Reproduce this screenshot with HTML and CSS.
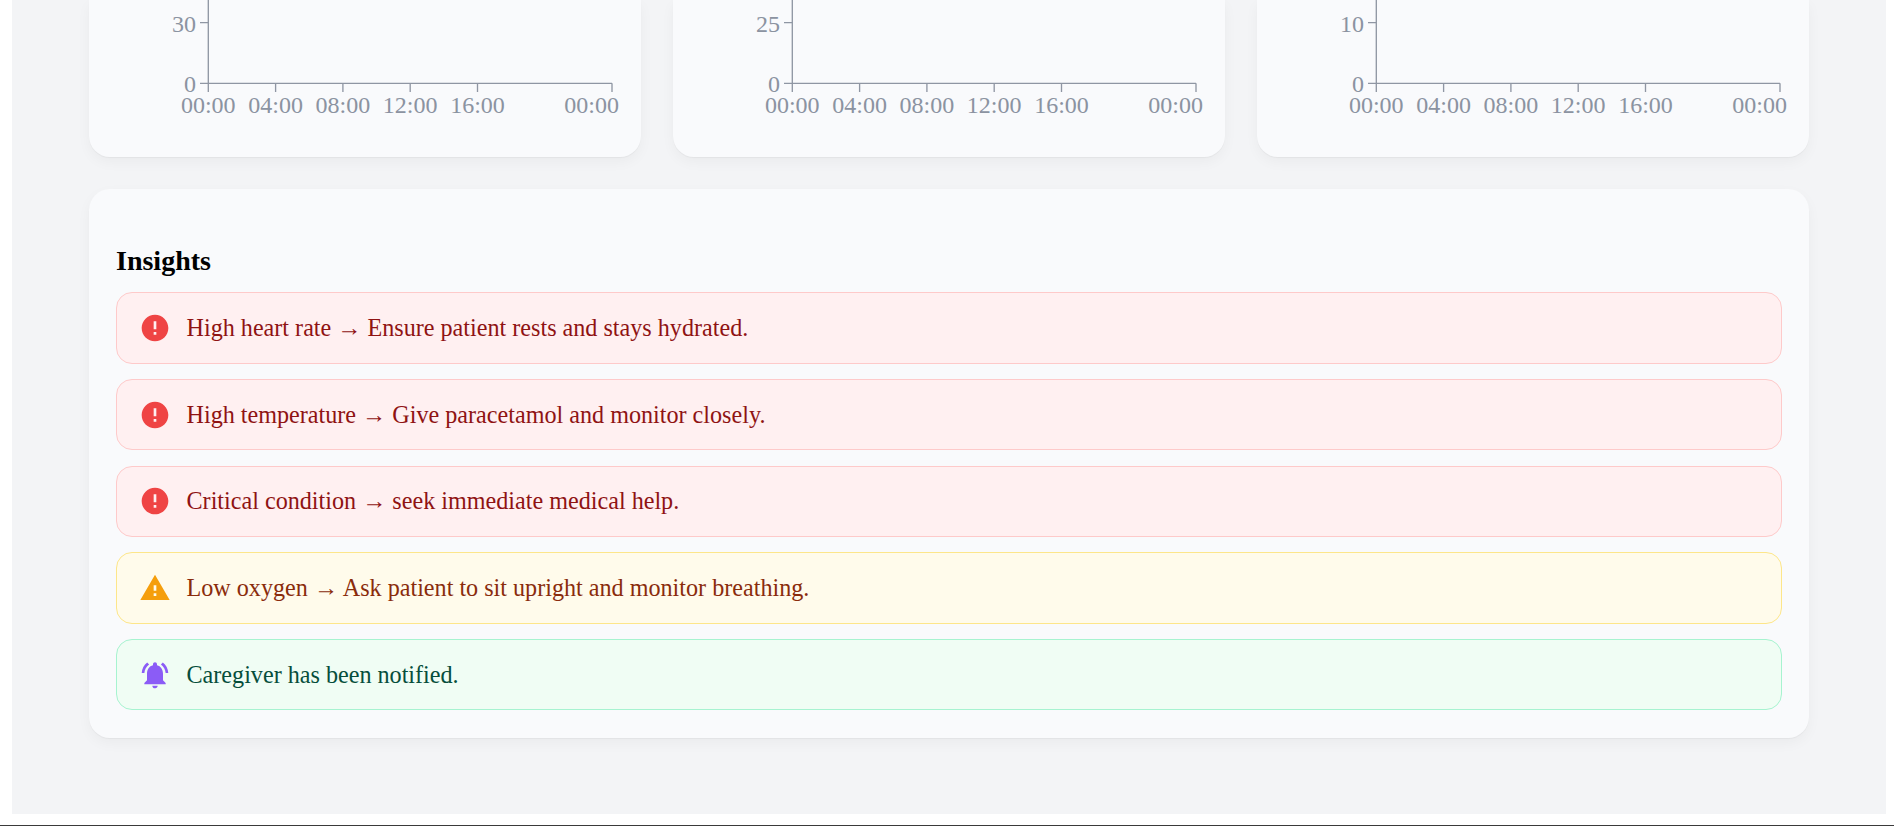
FILE: index.html
```html
<!DOCTYPE html>
<html lang="en">
<head>
  <meta charset="UTF-8">
  <title>Patient Dashboard</title>
  <link rel="stylesheet" href="styles.css">
</head>
<body>
  <main class="panel">
    <section class="chart-row">
      <div class="card chart-card">
        <svg class="chart" width="552" height="157" viewBox="0 0 552 157">
          <path class="axis" d="M119.3 0V83.3M111 22.7H119.3M111 83.3H119.3M119.3 83.3H523M119.3 83.3V92M186.6 83.3V92M253.9 83.3V92M321.2 83.3V92M388.5 83.3V92M523 83.3V92"/>
          <text class="tick end" x="107" y="32">30</text>
          <text class="tick end" x="107" y="92">0</text>
          <text class="tick" x="119.3" y="113">00:00</text>
          <text class="tick" x="186.6" y="113">04:00</text>
          <text class="tick" x="253.9" y="113">08:00</text>
          <text class="tick" x="321.2" y="113">12:00</text>
          <text class="tick" x="388.5" y="113">16:00</text>
          <text class="tick end" x="530" y="113">00:00</text>
        </svg>
      </div>
      <div class="card chart-card">
        <svg class="chart" width="552" height="157" viewBox="0 0 552 157">
          <path class="axis" d="M119.3 0V83.3M111 22.7H119.3M111 83.3H119.3M119.3 83.3H523M119.3 83.3V92M186.6 83.3V92M253.9 83.3V92M321.2 83.3V92M388.5 83.3V92M523 83.3V92"/>
          <text class="tick end" x="107" y="32">25</text>
          <text class="tick end" x="107" y="92">0</text>
          <text class="tick" x="119.3" y="113">00:00</text>
          <text class="tick" x="186.6" y="113">04:00</text>
          <text class="tick" x="253.9" y="113">08:00</text>
          <text class="tick" x="321.2" y="113">12:00</text>
          <text class="tick" x="388.5" y="113">16:00</text>
          <text class="tick end" x="530" y="113">00:00</text>
        </svg>
      </div>
      <div class="card chart-card">
        <svg class="chart" width="552" height="157" viewBox="0 0 552 157">
          <path class="axis" d="M119.3 0V83.3M111 22.7H119.3M111 83.3H119.3M119.3 83.3H523M119.3 83.3V92M186.6 83.3V92M253.9 83.3V92M321.2 83.3V92M388.5 83.3V92M523 83.3V92"/>
          <text class="tick end" x="107" y="32">10</text>
          <text class="tick end" x="107" y="92">0</text>
          <text class="tick" x="119.3" y="113">00:00</text>
          <text class="tick" x="186.6" y="113">04:00</text>
          <text class="tick" x="253.9" y="113">08:00</text>
          <text class="tick" x="321.2" y="113">12:00</text>
          <text class="tick" x="388.5" y="113">16:00</text>
          <text class="tick end" x="530" y="113">00:00</text>
        </svg>
      </div>
    </section>

    <section class="card insights">
      <h3>Insights</h3>
      <div class="alert alert-red">
        <svg class="icon icon-red" viewBox="0 0 24 24"><path d="M12 2C6.48 2 2 6.48 2 12s4.48 10 10 10 10-4.48 10-10S17.52 2 12 2zm1 15h-2v-2h2v2zm0-4h-2V7h2v6z"/></svg>
        <span>High heart rate → Ensure patient rests and stays hydrated.</span>
      </div>
      <div class="alert alert-red">
        <svg class="icon icon-red" viewBox="0 0 24 24"><path d="M12 2C6.48 2 2 6.48 2 12s4.48 10 10 10 10-4.48 10-10S17.52 2 12 2zm1 15h-2v-2h2v2zm0-4h-2V7h2v6z"/></svg>
        <span>High temperature → Give paracetamol and monitor closely.</span>
      </div>
      <div class="alert alert-red">
        <svg class="icon icon-red" viewBox="0 0 24 24"><path d="M12 2C6.48 2 2 6.48 2 12s4.48 10 10 10 10-4.48 10-10S17.52 2 12 2zm1 15h-2v-2h2v2zm0-4h-2V7h2v6z"/></svg>
        <span>Critical condition → seek immediate medical help.</span>
      </div>
      <div class="alert alert-yellow">
        <svg class="icon icon-amber" viewBox="0 0 24 24"><path d="M1 21h22L12 2 1 21zm12-3h-2v-2h2v2zm0-4h-2v-4h2v4z"/></svg>
        <span>Low oxygen → Ask patient to sit upright and monitor breathing.</span>
      </div>
      <div class="alert alert-green">
        <svg class="icon icon-violet" viewBox="0 0 24 24"><path d="M7.58 4.08 6.15 2.65C3.75 4.48 2.17 7.3 2.03 10.5h2c.15-2.65 1.51-4.97 3.55-6.42zm12.39 6.42h2c-.15-3.2-1.73-6.02-4.12-7.85l-1.42 1.43c2.02 1.45 3.39 3.77 3.54 6.42zM18 11c0-3.07-1.64-5.64-4.5-6.32V4c0-.83-.67-1.5-1.5-1.5s-1.5.67-1.5 1.5v.68C7.63 5.36 6 7.92 6 11v5l-2 2v1h16v-1l-2-2v-5zm-6 11c.14 0 .27-.01.4-.04.65-.14 1.18-.58 1.44-1.18.1-.24.15-.5.15-.78h-4c.01 1.1.9 2 2.01 2z"/></svg>
        <span>Caregiver has been notified.</span>
      </div>
    </section>
  </main>
  <div class="page-edge"></div>
</body>
</html>
```

FILE: styles.css
```css
html, body {
  height: 826px;
}
body {
  margin: 0;
  overflow: hidden;
  display: flex;
  flex-direction: column;
  justify-content: space-between;
  background-color: #fff;
  color: #000;
  font-family: "Liberation Serif", serif;
}
.panel {
  height: 814px;
  box-sizing: border-box;
  margin: 0 8px 0 12px;
  padding: 0 77px;
  background-color: #f3f4f6;
}
.page-edge {
  height: 1px;
  background-color: #3a3a3a;
}
.card {
  background-color: #f9fafc;
  border-radius: 21px;
  box-shadow: 0 1px 1px rgba(0, 0, 0, 0.04), 0 5px 14px rgba(0, 0, 0, 0.04);
}
.chart-row {
  display: grid;
  grid-template-columns: repeat(3, 552px);
  gap: 32px;
}
.chart-card {
  height: 157px;
  border-radius: 0 0 21px 21px;
}
.chart {
  display: block;
}
.axis {
  fill: none;
  stroke: #8f96a3;
  stroke-width: 1.33;
}
.tick {
  font-size: 24px;
  fill: #8b93a1;
  text-anchor: middle;
}
.tick.end {
  text-anchor: end;
}
.insights {
  margin-top: 32px;
  padding: 56px 27px 28px;
}
.insights h3 {
  margin: 0 0 15px;
  font-size: 28px;
  line-height: 32px;
}
.alert {
  display: flex;
  align-items: center;
  gap: 15.5px;
  margin-top: 15.4px;
  padding: 18.65px 22px;
  border: 1.33px solid;
  border-radius: 16px;
  font-size: 24.15px;
}
.alert-red {
  background-color: #fff0f1;
  border-color: #fecaca;
  color: #8f1313;
}
.alert-yellow {
  background-color: #fffbeb;
  border-color: #fde68a;
  color: #8a2c0c;
}
.alert-green {
  background-color: #f0fdf4;
  border-color: #a7f3d0;
  color: #064e3b;
}
.icon {
  width: 32px;
  height: 32px;
  flex: none;
}
.icon-red { fill: #ef4444; }
.icon-amber { fill: #f59e0b; }
.icon-violet { fill: #8b5cf6; }
```
